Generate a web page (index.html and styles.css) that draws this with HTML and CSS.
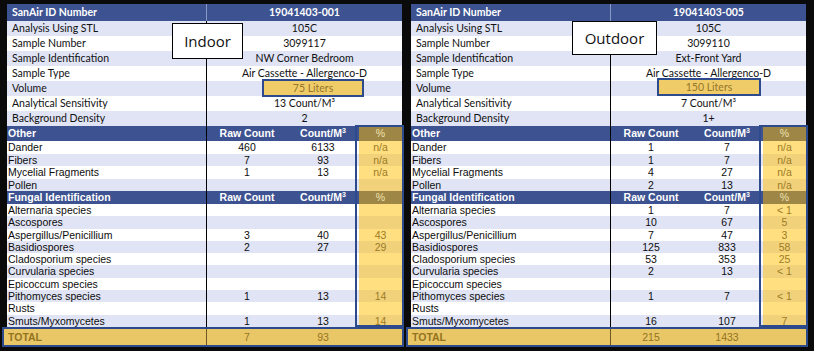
FILE: index.html
```html
<!DOCTYPE html>
<html>
<head>
<meta charset="utf-8">
<link rel="stylesheet" href="styles.css">
</head>
<body>
<div class="frame">
  <section class="panel">
    <div class="tag tag-indoor">Indoor</div>
    <div class="info id-row"><span class="lab">SanAir ID Number</span><span class="val">19041403-001</span></div>
    <div class="info alt"><span class="lab">Analysis Using STL</span><span class="val">105C</span></div>
    <div class="info"><span class="lab">Sample Number</span><span class="val">3099117</span></div>
    <div class="info alt"><span class="lab">Sample Identification</span><span class="val">NW Corner Bedroom</span></div>
    <div class="info"><span class="lab">Sample Type</span><span class="val">Air Cassette - Allergenco-D</span></div>
    <div class="info alt"><span class="lab">Volume</span><span class="val"></span></div>
    <div class="info"><span class="lab">Analytical Sensitivity</span><span class="val">13 Count/M³</span></div>
    <div class="info alt"><span class="lab">Background Density</span><span class="val">2</span></div>
    <div class="volume vol-indoor">75 Liters</div>
    <div class="counts">
      <div class="row head"><span class="lab">Other</span><span>Raw Count</span><span>Count/M<sup>3</sup></span><span class="pct">%</span></div>
      <div class="row"><span class="lab">Dander</span><span>460</span><span>6133</span><span class="pct">n/a</span></div>
      <div class="row alt"><span class="lab">Fibers</span><span>7</span><span>93</span><span class="pct">n/a</span></div>
      <div class="row"><span class="lab">Mycelial Fragments</span><span>1</span><span>13</span><span class="pct">n/a</span></div>
      <div class="row alt"><span class="lab">Pollen</span><span></span><span></span><span class="pct"></span></div>
      <div class="row head head-f"><span class="lab">Fungal Identification</span><span>Raw Count</span><span>Count/M<sup>3</sup></span><span class="pct">%</span></div>
      <div class="row f"><span class="lab">Alternaria species</span><span></span><span></span><span class="pct"></span></div>
      <div class="row f alt"><span class="lab">Ascospores</span><span></span><span></span><span class="pct"></span></div>
      <div class="row f"><span class="lab">Aspergillus/Penicillium</span><span>3</span><span>40</span><span class="pct">43</span></div>
      <div class="row f alt"><span class="lab">Basidiospores</span><span>2</span><span>27</span><span class="pct">29</span></div>
      <div class="row f"><span class="lab">Cladosporium species</span><span></span><span></span><span class="pct"></span></div>
      <div class="row f alt"><span class="lab">Curvularia species</span><span></span><span></span><span class="pct"></span></div>
      <div class="row f"><span class="lab">Epicoccum species</span><span></span><span></span><span class="pct"></span></div>
      <div class="row f alt"><span class="lab">Pithomyces species</span><span>1</span><span>13</span><span class="pct">14</span></div>
      <div class="row f"><span class="lab">Rusts</span><span></span><span></span><span class="pct"></span></div>
      <div class="row f alt"><span class="lab">Smuts/Myxomycetes</span><span>1</span><span>13</span><span class="pct">14</span></div>
    </div>
    <div class="total"><span class="lab">TOTAL</span><span>7</span><span>93</span><span></span></div>
  </section>

  <section class="panel">
    <div class="tag tag-outdoor">Outdoor</div>
    <div class="info id-row"><span class="lab">SanAir ID Number</span><span class="val">19041403-005</span></div>
    <div class="info alt"><span class="lab">Analysis Using STL</span><span class="val">105C</span></div>
    <div class="info"><span class="lab">Sample Number</span><span class="val">3099110</span></div>
    <div class="info alt"><span class="lab">Sample Identification</span><span class="val">Ext-Front Yard</span></div>
    <div class="info"><span class="lab">Sample Type</span><span class="val">Air Cassette - Allergenco-D</span></div>
    <div class="info alt"><span class="lab">Volume</span><span class="val"></span></div>
    <div class="info"><span class="lab">Analytical Sensitivity</span><span class="val">7 Count/M³</span></div>
    <div class="info alt"><span class="lab">Background Density</span><span class="val">1+</span></div>
    <div class="volume vol-outdoor">150 Liters</div>
    <div class="counts">
      <div class="row head"><span class="lab">Other</span><span>Raw Count</span><span>Count/M<sup>3</sup></span><span class="pct">%</span></div>
      <div class="row"><span class="lab">Dander</span><span>1</span><span>7</span><span class="pct">n/a</span></div>
      <div class="row alt"><span class="lab">Fibers</span><span>1</span><span>7</span><span class="pct">n/a</span></div>
      <div class="row"><span class="lab">Mycelial Fragments</span><span>4</span><span>27</span><span class="pct">n/a</span></div>
      <div class="row alt"><span class="lab">Pollen</span><span>2</span><span>13</span><span class="pct">n/a</span></div>
      <div class="row head head-f"><span class="lab">Fungal Identification</span><span>Raw Count</span><span>Count/M<sup>3</sup></span><span class="pct">%</span></div>
      <div class="row f"><span class="lab">Alternaria species</span><span>1</span><span>7</span><span class="pct">&lt; 1</span></div>
      <div class="row f alt"><span class="lab">Ascospores</span><span>10</span><span>67</span><span class="pct">5</span></div>
      <div class="row f"><span class="lab">Aspergillus/Penicillium</span><span>7</span><span>47</span><span class="pct">3</span></div>
      <div class="row f alt"><span class="lab">Basidiospores</span><span>125</span><span>833</span><span class="pct">58</span></div>
      <div class="row f"><span class="lab">Cladosporium species</span><span>53</span><span>353</span><span class="pct">25</span></div>
      <div class="row f alt"><span class="lab">Curvularia species</span><span>2</span><span>13</span><span class="pct">&lt; 1</span></div>
      <div class="row f"><span class="lab">Epicoccum species</span><span></span><span></span><span class="pct"></span></div>
      <div class="row f alt"><span class="lab">Pithomyces species</span><span>1</span><span>7</span><span class="pct">&lt; 1</span></div>
      <div class="row f"><span class="lab">Rusts</span><span></span><span></span><span class="pct"></span></div>
      <div class="row f alt"><span class="lab">Smuts/Myxomycetes</span><span>16</span><span>107</span><span class="pct">7</span></div>
    </div>
    <div class="total"><span class="lab">TOTAL</span><span>215</span><span>1433</span><span></span></div>
  </section>
</div>
</body>
</html>
```

FILE: styles.css
```css
* { box-sizing: border-box; }
html, body { margin: 0; padding: 0; background: #ffffff; }

.frame {
  display: flex;
  gap: 9px;
  width: 814px;
  height: 351px;
  padding: 4px 0 0 7px;
  background: #0a0a0a;
}

.panel {
  position: relative;
  width: 395px;
  display: flex;
  flex-direction: column;
}

/* top info block */
.info {
  display: grid;
  grid-template-columns: 200px 195px;
  height: 15px;
  background: #ffffff;
  font-family: "Lato", "Open Sans", sans-serif;
  font-size: 10.5px;
  color: #111111;
  line-height: 15px;
}
.info.alt { background: #e0e4f5; }
.info .lab {
  padding-left: 5px;
  border-right: 1px solid #000;
  white-space: nowrap;
}
.info .val { text-align: center; white-space: nowrap; }
.info.id-row {
  height: 17px;
  line-height: 17px;
  background: #3d5290;
  color: #ffffff;
  font-weight: bold;
}
.info.id-row .lab { border-right-color: #8a98c4; }

.tag {
  position: absolute;
  background: #ffffff;
  border: 1px solid #000;
  font-family: "Open Sans", "Lato", sans-serif;
  font-size: 15px;
  color: #111;
  display: flex;
  align-items: center;
  justify-content: center;
  z-index: 2;
}
.tag-indoor { left: 165px; top: 19px; width: 71px; height: 36px; }
.tag-outdoor { left: 161px; top: 17px; width: 85px; height: 34px; }

.volume {
  position: absolute;
  top: 75px;
  height: 18px;
  background: #f0cc69;
  border: 2px solid #2d4a8c;
  color: #94752a;
  font-family: "Lato", "Open Sans", sans-serif;
  font-size: 10.5px;
  display: flex;
  align-items: center;
  justify-content: center;
  z-index: 2;
}
.vol-indoor { left: 255px; width: 102px; }
.vol-outdoor { left: 246px; width: 104px; top: 74px; }

/* counts block */
.counts { position: relative; }
.counts::after {
  content: "";
  position: absolute;
  top: -1px;
  bottom: 0;
  right: -2px;
  width: 45px;
  border: 2px solid #2d4a8c;
  pointer-events: none;
}

.row, .total {
  display: grid;
  grid-template-columns: 200px 80px 72px 43px;
  font-family: "Liberation Sans", Arial, sans-serif;
  font-size: 10.5px;
  color: #0d0d0d;
  text-align: center;
  white-space: nowrap;
}
.row {
  height: 12.5px;
  line-height: 12.5px;
  background: #ffffff;
}
.row.f { height: 12.3px; line-height: 12.3px; }
.row.alt { background: #e0e4f5; }
.row .lab {
  text-align: left;
  padding-left: 1px;
  border-right: 1px solid #000;
}
.row .pct { background: #ffdf80; color: #9c7b26; }
.row.alt .pct { background: #f1d27b; }

.row.head {
  height: 15px;
  line-height: 15px;
  background: #3d5290;
  color: #ffffff;
  font-weight: bold;
}
.row.head-f { height: 13px; line-height: 13px; }
.row.head .pct { background: #9d8646; color: #f1e3ad; font-weight: normal; }
.row.head sup { font-size: 7px; line-height: 0; vertical-align: 4px; }

.total {
  height: 20px;
  line-height: 16px;
  margin: 0 -2px 0 -5px;
  grid-template-columns: 203px 80px 72px 43px;
  background: #e9c767;
  border: 2px solid #2d4a8c;
  color: #94731f;
}
.total .lab {
  text-align: left;
  padding-left: 4px;
  font-weight: bold;
  border-right: 1px solid #6d5a22;
}
```
